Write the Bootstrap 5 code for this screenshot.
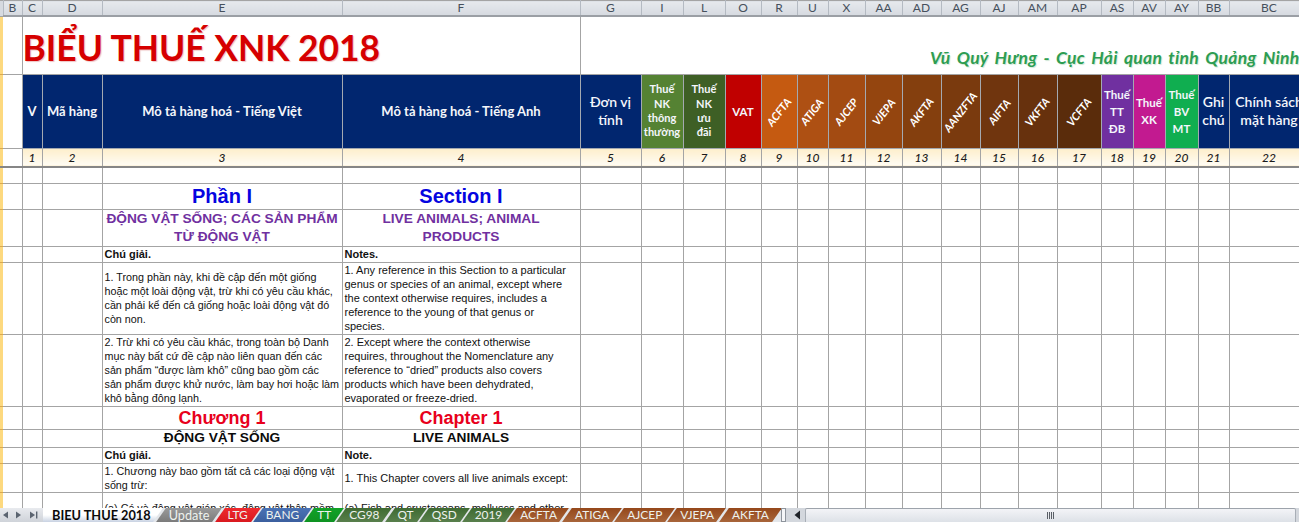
<!DOCTYPE html>
<html lang="vi">
<head>
<meta charset="utf-8">
<title>Biểu thuế XNK 2018</title>
<link href="https://cdn.jsdelivr.net/npm/bootstrap@5.3.0/dist/css/bootstrap.min.css" rel="stylesheet">
<style>
html,body{height:522px;overflow:hidden;background:#fff}
.sheet-wrap{height:508px;overflow:hidden}
.xl{width:1309px;table-layout:fixed;border-collapse:collapse;font-family:"Liberation Sans",Arial,sans-serif;font-size:11px;line-height:14px;color:#111;--bs-table-border-color:#a4a4a4;--bs-table-bg:transparent}
.xl>:not(caption)>*>*{padding:0 2px;border:1px solid #a4a4a4;vertical-align:middle;overflow:hidden;box-shadow:none}
.xl>:not(caption)>tr>.rail{padding:0;background:#fdd97f;border-width:0 0 1px 0;border-color:#dba94e}
.xl>:not(caption)>tr>.colb{border-top:0;border-bottom:0;border-left:0}
.xl>:not(caption)>tr>.gcol{border-left:1px solid #4d4d4d}
.h-let{height:15px}.h-title{height:58px}.h-head{height:74px}.h-num{height:19px}.h-blank{height:16px}
.h-sec{height:26px}.h-sub{height:36px}.h-note{height:16px}.h-p1{height:72px}.h-p2{height:72px}
.h-ch{height:23px}.h-cht{height:18px}.h-cn{height:16px}.h-c1{height:29px}.h-c2{height:32px}
.xl>thead>tr>th.lett{background:linear-gradient(#e6e9ed,#d6dae0);border-width:0 1px 2px 1px;border-color:#b4bac2;border-bottom-color:#9b9fa5;text-align:center;font:400 12px/14px Lato,sans-serif;color:#46505c;padding:0}
.xl>thead>tr>th.rail-top{background:#d6dae0;border:0;padding:0}
.xl>tbody>tr>.ttl{border-top:0;border-left:1px solid #a4a4a4;padding:0}
.big-title{font:700 35.4px/40px Lato,sans-serif;color:#d60000;text-shadow:1px 1px 1px #eec4c4;white-space:nowrap;margin:6px 0 0 0}
.xl>tbody>tr>.author{border-top:0;vertical-align:bottom;text-align:right;padding:0 9px 6px 0;font:italic 700 17.5px/20px Lato,sans-serif;color:#2d9d52;word-spacing:2.1px;letter-spacing:.27px;white-space:nowrap;text-shadow:1px 1px 1px #cfe6d6}
.xl>tbody>tr>.hd{color:#f4f6fb;text-align:center;font:700 13px/17px Lato,sans-serif;padding:0;border-color:#a4a9b1}
.xl>tbody>tr>.hd.sm{font-size:11px;line-height:14.3px}
.xl>tbody>tr>.hd.md{font-size:14px;line-height:18px;font-weight:600}
.xl>tbody>tr>.hd.sb{font-size:11.5px;line-height:17px}
.xl>tbody>tr>.hd.navy{background:#01266f}
.xl>tbody>tr>.c-i{background:#558233}.xl>tbody>tr>.c-l{background:#3e5f25}.xl>tbody>tr>.c-o{background:#c00000}
.xl>tbody>tr>.c-r{background:#c55a11}.xl>tbody>tr>.c-u{background:#ae5013}.xl>tbody>tr>.c-x{background:#a34b12}
.xl>tbody>tr>.c-aa{background:#94450f}.xl>tbody>tr>.c-ad{background:#843f0e}.xl>tbody>tr>.c-ag{background:#7a3a0e}
.xl>tbody>tr>.c-aj{background:#70350e}.xl>tbody>tr>.c-am{background:#67310d}.xl>tbody>tr>.c-ap{background:#5a2c0b}
.xl>tbody>tr>.c-as{background:#7030a0}.xl>tbody>tr>.c-av{background:#c21a90}.xl>tbody>tr>.c-ay{background:#10ae50}
.slant{display:inline-block;margin:0 -20px;transform:rotate(-52deg);font:italic 700 11px/12px Lato,sans-serif;white-space:nowrap;color:#fff}
.xl>tbody>tr>.nm{background:linear-gradient(#fdeecb,#fffcf4);text-align:center;font:italic 500 12px/14px Lato,sans-serif;color:#1b1b1b;padding:1px 0 0}
.xl>tbody>tr.strong-b>td{border-bottom:2px solid #868686}
.xl>tbody>tr>.sec-t{font-weight:700;font-size:20px;line-height:22px;color:#0505e0;text-align:center;white-space:nowrap}
.xl>tbody>tr>.sub-t{font-weight:700;font-size:13.7px;line-height:18px;color:#7030a0;text-align:center}
.xl>tbody>tr>.ch-t{font-weight:700;font-size:18px;line-height:20px;color:#e8001c;text-align:center;white-space:nowrap}
.xl>tbody>tr>.cht-t{font-weight:700;font-size:13.7px;line-height:16px;color:#0b0b0b;text-align:center;white-space:nowrap}
.xl>tbody>tr>.nb{font-weight:700}
.xl>tbody>tr>.nw{white-space:nowrap}
.xl>tbody>tr>.vn{font-size:10.75px}
.sheetbar{height:14px;background:#d3d7dd;font-family:Lato,sans-serif}
.navbtns{width:43px;flex:none;background:linear-gradient(#e8eaee,#cfd3d9)}
.sheet-list{width:738px;flex:none;overflow:hidden;background:#e3e6ea}
.stab{flex:none;position:relative;isolation:isolate;height:14px;padding:0 9px;font-size:11.9px;line-height:14px;color:#eef2ee;white-space:nowrap}
.stab::before{content:"";position:absolute;inset:0 1.2px;z-index:-1;transform:skewX(-35deg);background:var(--tab)}
.stab.act{color:#0a0a0a;font-weight:700;font-size:12.75px;padding:0 9px}
.stab.upd{font-size:12.7px}
.stab.act::before{left:-12px}
.t-act{--tab:linear-gradient(#fff 50%,#c8d2e2)}
.t-gray{--tab:linear-gradient(#9a9a9a,#7b7b7b)}
.t-red{--tab:linear-gradient(#ee2a2e,#d9191f)}
.t-blue{--tab:linear-gradient(#4a72b5,#3b5f9e)}
.t-green{--tab:linear-gradient(#12a228,#0e9222)}
.t-olive{--tab:linear-gradient(#3f6b32,#587f4c)}
.t-brown{--tab:linear-gradient(#95481b,#a8653a)}
.splitter{width:5px;flex:none;background:#f5f6f8;border:1px solid #8e949c;margin-right:7px}
.scrollarrow{width:12px;flex:none}
.scroll-thumb{flex:1 1 auto;margin:0 3px 0 0;background:linear-gradient(#f3f4f7,#dde1e7);border:1px solid #a8aeb6;border-bottom:0;border-top-color:#9da3ab;border-radius:2px 2px 0 0}
.grip{width:7px;height:7px;background:repeating-linear-gradient(90deg,#5a5f66 0 1px,#e8eaee 1px 2px)}
</style>
</head>
<body class="m-0">
<div class="sheet-wrap">
<table class="table table-bordered mb-0 xl">
<colgroup>
<col style="width:3px"><col style="width:19px"><col style="width:20px"><col style="width:60px"><col style="width:240px"><col style="width:238px"><col style="width:61px"><col style="width:42px"><col style="width:42px"><col style="width:36px"><col style="width:36px"><col style="width:31px"><col style="width:37px"><col style="width:37px"><col style="width:39px"><col style="width:39px"><col style="width:38px"><col style="width:39px"><col style="width:44px"><col style="width:32px"><col style="width:32px"><col style="width:33px"><col style="width:31px"><col style="width:80px">
</colgroup>
<thead>
<tr class="h-let"><th class="rail-top"></th><th class="lett">B</th><th class="lett">C</th><th class="lett">D</th><th class="lett">E</th><th class="lett">F</th><th class="lett">G</th><th class="lett">I</th><th class="lett">L</th><th class="lett">O</th><th class="lett">R</th><th class="lett">U</th><th class="lett">X</th><th class="lett">AA</th><th class="lett">AD</th><th class="lett">AG</th><th class="lett">AJ</th><th class="lett">AM</th><th class="lett">AP</th><th class="lett">AS</th><th class="lett">AV</th><th class="lett">AY</th><th class="lett">BB</th><th class="lett">BC</th></tr>
</thead>
<tbody>
<tr class="h-title"><td class="rail"></td><td class="colb"></td><td class="ttl" colspan="4"><div class="big-title">BIỂU THUẾ XNK 2018</div></td><td class="author gcol" colspan="18">Vũ Quý Hưng - Cục Hải quan tỉnh Quảng Ninh</td></tr>
<tr class="h-head"><td class="rail"></td><td class="colb"></td>
<td class="hd navy">V</td><td class="hd navy">Mã hàng</td><td class="hd navy">Mô tả hàng hoá - Tiếng Việt</td><td class="hd navy">Mô tả hàng hoá - Tiếng Anh</td>
<td class="hd md navy gcol">Đơn vị<br>tính</td>
<td class="hd sm c-i">Thuế<br>NK<br>thông<br>thường</td><td class="hd sm c-l">Thuế<br>NK<br>ưu<br>đãi</td><td class="hd c-o sb">VAT</td>
<td class="hd c-r"><span class="slant">ACFTA</span></td><td class="hd c-u"><span class="slant">ATIGA</span></td><td class="hd c-x"><span class="slant">AJCEP</span></td><td class="hd c-aa"><span class="slant">VJEPA</span></td><td class="hd c-ad"><span class="slant">AKFTA</span></td><td class="hd c-ag"><span class="slant">AANZFTA</span></td><td class="hd c-aj"><span class="slant">AIFTA</span></td><td class="hd c-am"><span class="slant">VKFTA</span></td><td class="hd c-ap"><span class="slant">VCFTA</span></td>
<td class="hd sb c-as">Thuế<br>TT<br>ĐB</td><td class="hd sb c-av">Thuế<br>XK</td><td class="hd sb c-ay">Thuế<br>BV<br>MT</td><td class="hd md navy">Ghi<br>chú</td><td class="hd md navy">Chính sách<br>mặt hàng</td></tr>
<tr class="h-num strong-b"><td class="rail"></td><td class="colb"></td><td class="nm">1</td><td class="nm">2</td><td class="nm">3</td><td class="nm">4</td><td class="nm gcol">5</td><td class="nm">6</td><td class="nm">7</td><td class="nm">8</td><td class="nm">9</td><td class="nm">10</td><td class="nm">11</td><td class="nm">12</td><td class="nm">13</td><td class="nm">14</td><td class="nm">15</td><td class="nm">16</td><td class="nm">17</td><td class="nm">18</td><td class="nm">19</td><td class="nm">20</td><td class="nm">21</td><td class="nm">22</td></tr>
<tr class="h-blank"><td class="rail"></td><td class="colb"></td><td></td><td></td><td></td><td></td><td class="gcol"></td><td></td><td></td><td></td><td></td><td></td><td></td><td></td><td></td><td></td><td></td><td></td><td></td><td></td><td></td><td></td><td></td><td></td></tr>
<tr class="h-sec"><td class="rail"></td><td class="colb"></td><td></td><td></td><td class="sec-t">Phần I</td><td class="sec-t">Section I</td><td class="gcol"></td><td></td><td></td><td></td><td></td><td></td><td></td><td></td><td></td><td></td><td></td><td></td><td></td><td></td><td></td><td></td><td></td><td></td></tr>
<tr class="h-sub"><td class="rail"></td><td class="colb"></td><td></td><td></td><td class="sub-t">ĐỘNG VẬT SỐNG; CÁC SẢN PHẨM<br>TỪ ĐỘNG VẬT</td><td class="sub-t">LIVE ANIMALS; ANIMAL<br>PRODUCTS</td><td class="gcol"></td><td></td><td></td><td></td><td></td><td></td><td></td><td></td><td></td><td></td><td></td><td></td><td></td><td></td><td></td><td></td><td></td><td></td></tr>
<tr class="h-note"><td class="rail"></td><td class="colb"></td><td></td><td></td><td class="nb">Chú giải.</td><td class="nb">Notes.</td><td class="gcol"></td><td></td><td></td><td></td><td></td><td></td><td></td><td></td><td></td><td></td><td></td><td></td><td></td><td></td><td></td><td></td><td></td><td></td></tr>
<tr class="h-p1"><td class="rail"></td><td class="colb"></td><td></td><td></td><td class="nw vn">1. Trong phần này, khi đề cập đến một giống<br>hoặc một loài động vật, trừ khi có yêu cầu khác,<br>cần phải kể đến cả giống hoặc loài động vật đó<br>còn non.</td><td class="nw">1. Any reference in this Section to a particular<br>genus or species of an animal, except where<br>the context otherwise requires, includes a<br>reference to the young of that genus or<br>species.</td><td class="gcol"></td><td></td><td></td><td></td><td></td><td></td><td></td><td></td><td></td><td></td><td></td><td></td><td></td><td></td><td></td><td></td><td></td><td></td></tr>
<tr class="h-p2"><td class="rail"></td><td class="colb"></td><td></td><td></td><td class="nw vn">2. Trừ khi có yêu cầu khác, trong toàn bộ Danh<br>mục này bất cứ đề cập nào liên quan đến các<br>sản phẩm “được làm khô” cũng bao gồm các<br>sản phẩm được khử nước, làm bay hơi hoặc làm<br>khô bằng đông lạnh.</td><td class="nw">2. Except where the context otherwise<br>requires, throughout the Nomenclature any<br>reference to “dried” products also covers<br>products which have been dehydrated,<br>evaporated or freeze-dried.</td><td class="gcol"></td><td></td><td></td><td></td><td></td><td></td><td></td><td></td><td></td><td></td><td></td><td></td><td></td><td></td><td></td><td></td><td></td><td></td></tr>
<tr class="h-ch"><td class="rail"></td><td class="colb"></td><td></td><td></td><td class="ch-t">Chương 1</td><td class="ch-t">Chapter 1</td><td class="gcol"></td><td></td><td></td><td></td><td></td><td></td><td></td><td></td><td></td><td></td><td></td><td></td><td></td><td></td><td></td><td></td><td></td><td></td></tr>
<tr class="h-cht"><td class="rail"></td><td class="colb"></td><td></td><td></td><td class="cht-t">ĐỘNG VẬT SỐNG</td><td class="cht-t">LIVE ANIMALS</td><td class="gcol"></td><td></td><td></td><td></td><td></td><td></td><td></td><td></td><td></td><td></td><td></td><td></td><td></td><td></td><td></td><td></td><td></td><td></td></tr>
<tr class="h-cn"><td class="rail"></td><td class="colb"></td><td></td><td></td><td class="nb">Chú giải.</td><td class="nb">Note.</td><td class="gcol"></td><td></td><td></td><td></td><td></td><td></td><td></td><td></td><td></td><td></td><td></td><td></td><td></td><td></td><td></td><td></td><td></td><td></td></tr>
<tr class="h-c1"><td class="rail"></td><td class="colb"></td><td></td><td></td><td class="nw vn">1. Chương này bao gồm tất cả các loại động vật<br>sống trừ:</td><td class="nw">1. This Chapter covers all live animals except:</td><td class="gcol"></td><td></td><td></td><td></td><td></td><td></td><td></td><td></td><td></td><td></td><td></td><td></td><td></td><td></td><td></td><td></td><td></td><td></td></tr>
<tr class="h-c2"><td class="rail"></td><td class="colb"></td><td></td><td></td><td class="nw vn">(a) Cá và động vật giáp xác, động vật thân mềm</td><td class="nw">(a) Fish and crustaceans, molluscs and other</td><td class="gcol"></td><td></td><td></td><td></td><td></td><td></td><td></td><td></td><td></td><td></td><td></td><td></td><td></td><td></td><td></td><td></td><td></td><td></td></tr>
</tbody>
</table>
</div>
<div class="sheetbar d-flex align-items-stretch">
<div class="navbtns d-flex align-items-center">
<svg width="43" height="14" viewBox="0 0 43 14"><path d="M8 3.5v7L3 7z" fill="#5b6470"/><path d="M16 3.5v7L21 7z" fill="#5b6470"/><path d="M30 3.5v7L35 7z" fill="#5b6470"/><rect x="36" y="3.5" width="1.4" height="7" fill="#5b6470"/></svg>
</div>
<div class="sheet-list d-flex">
<span class="stab act t-act">BIEU THUE 2018</span>
<span class="stab upd t-gray">Update</span>
<span class="stab t-red">LTG</span>
<span class="stab t-blue">BANG</span>
<span class="stab t-green">TT</span>
<span class="stab t-olive">CG98</span>
<span class="stab t-olive">QT</span>
<span class="stab t-olive">QSD</span>
<span class="stab t-olive">2019</span>
<span class="stab t-brown">ACFTA</span>
<span class="stab t-brown">ATIGA</span>
<span class="stab t-brown">AJCEP</span>
<span class="stab t-brown">VJEPA</span>
<span class="stab t-brown">AKFTA</span>
</div>
<div class="splitter"></div>
<div class="scrollarrow d-flex align-items-center"><svg width="12" height="14" viewBox="0 0 12 14"><path d="M7 2.5v9L1.5 7z" fill="#1f2329"/></svg></div>
<div class="scroll-thumb d-flex align-items-center justify-content-center ms-0"><div class="grip"></div></div>
</div>
<script src="https://cdn.jsdelivr.net/npm/bootstrap@5.3.0/dist/js/bootstrap.bundle.min.js"></script>
</body>
</html>
